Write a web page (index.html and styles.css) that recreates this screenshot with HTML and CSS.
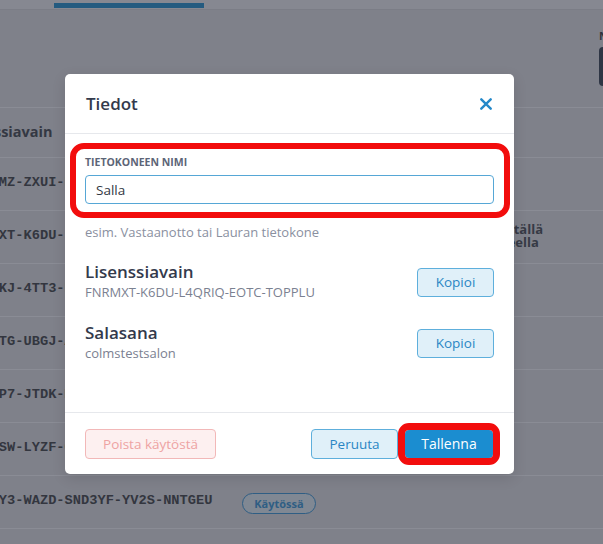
FILE: index.html
```html
<!DOCTYPE html>
<html lang="fi">
<head>
<meta charset="utf-8">
<title>Tiedot</title>
<link rel="stylesheet" href="styles.css">
</head>
<body>
<div class="page">
  <div class="topbar"><div class="tab"></div></div>
  <div class="toolbar">
    <div class="filter">
      <div class="filter-label">Nimi</div>
      <div class="filter-box"></div>
    </div>
  </div>
  <div class="table">
    <div class="thead"><span class="th-key">Lisenssiavain</span></div>
    <div class="row"><span class="key">KQPLMZ-ZXUI-R7TWQE-HNBA-XPLQWE</span><span class="cell"><span class="badge">Käytössä</span></span><span class="cell"></span></div>
    <div class="row"><span class="key">FNRMXT-K6DU-L4QRIQ-EOTC-TOPPLU</span><span class="cell"><span class="badge">Käytössä</span></span><span class="cell name">Käytössä tällä tietokoneella</span></div>
    <div class="row"><span class="key">WVBGKJ-4TT3-HQ2XNE-LMRA-PQZTUV</span><span class="cell"><span class="badge">Käytössä</span></span><span class="cell"></span></div>
    <div class="row"><span class="key">ZPLKTG-UBGJ-AQ4RTE-WNOS-KLPERT</span><span class="cell"><span class="badge">Käytössä</span></span><span class="cell"></span></div>
    <div class="row"><span class="key">HGTRP7-JTDK-MZ3QWE-PLAS-RTYUIO</span><span class="cell"><span class="badge">Käytössä</span></span><span class="cell"></span></div>
    <div class="row"><span class="key">QWMNSW-LYZF-CX8VBN-TREW-ASDFGH</span><span class="cell"><span class="badge">Käytössä</span></span><span class="cell"></span></div>
    <div class="row"><span class="key">KLMNY3-WAZD-SND3YF-YV2S-NNTGEU</span><span class="cell"><span class="badge">Käytössä</span></span><span class="cell"></span></div>
  </div>
</div>

<div class="modal">
  <div class="modal-header">
    <h2 class="modal-title">Tiedot</h2>
    <svg class="close" width="12" height="12" viewBox="0 0 12 12"><path d="M1.3 1.3 L10.7 10.7 M10.7 1.3 L1.3 10.7" stroke="#2388c9" stroke-width="2.4" stroke-linecap="round" fill="none"/></svg>
  </div>
  <div class="modal-body">
    <div class="field-group">
      <div class="field-label">Tietokoneen nimi</div>
      <div class="field-input">Salla</div>
    </div>
    <div class="hint">esim. Vastaanotto tai Lauran tietokone</div>
    <div class="info-row first">
      <div class="info-text">
        <div class="info-title">Lisenssiavain</div>
        <div class="info-value">FNRMXT-K6DU-L4QRIQ-EOTC-TOPPLU</div>
      </div>
      <button class="btn btn-light btn-copy">Kopioi</button>
    </div>
    <div class="info-row">
      <div class="info-text">
        <div class="info-title">Salasana</div>
        <div class="info-value">colmstestsalon</div>
      </div>
      <button class="btn btn-light btn-copy">Kopioi</button>
    </div>
  </div>
  <div class="modal-footer">
    <button class="btn btn-danger">Poista käytöstä</button>
    <div class="footer-right">
      <button class="btn btn-light btn-cancel">Peruuta</button>
      <button class="btn btn-primary">Tallenna</button>
    </div>
  </div>
</div>
</body>
</html>
```
FILE: styles.css
```css
html, body {
  margin: 0;
  padding: 0;
}
body {
  width: 603px;
  height: 544px;
  overflow: hidden;
  background: #7f818a;
  font-family: "Open Sans", "Noto Sans", Arial, sans-serif;
  position: relative;
}
.page {
  width: 603px;
}
.topbar {
  height: 9px;
  background: #868891;
  border-bottom: 1px solid #7b7d86;
  padding-left: 54px;
  display: flex;
  align-items: flex-end;
}
.tab {
  width: 150px;
  height: 5px;
  background: #245b80;
  margin-bottom: 1px;
}
.toolbar {
  height: 97px;
  display: flex;
  justify-content: flex-end;
}
.filter {
  width: 64px;
  margin-right: -60px;
  padding-top: 20px;
}
.filter-label {
  font-size: 11px;
  line-height: 12px;
  font-weight: 700;
  color: #30343e;
  margin-bottom: 5px;
}
.filter-box {
  height: 39px;
  background: #2e3544;
  border-radius: 4px;
}
.table {
  margin-left: -34px;
}
.thead {
  box-sizing: border-box;
  height: 51px;
  border-top: 1px solid #8a8c95;
  border-bottom: 1px solid #8a8c95;
  display: flex;
  align-items: center;
}
.th-key {
  font-size: 14.5px;
  font-weight: 700;
  color: #343843;
  margin-left: -10px;
  margin-top: -3px;
}
.row {
  box-sizing: border-box;
  height: 53px;
  border-bottom: 1px solid #8a8c95;
  display: grid;
  grid-template-columns: 276px 210px 1fr;
  align-items: center;
}
.key {
  font-family: "Liberation Mono", "Courier New", monospace;
  font-weight: 700;
  font-size: 13.7px;
  color: #33363f;
  white-space: nowrap;
  margin-top: -3px;
}
.badge {
  display: inline-flex;
  align-items: center;
  justify-content: center;
  box-sizing: border-box;
  width: 74px;
  height: 21px;
  border: 1.5px solid #2f5e84;
  border-radius: 11px;
  font-size: 11px;
  font-weight: 700;
  color: #2f5e84;
  background: #808893;
}
.name {
  width: 100px;
  font-size: 13px;
  line-height: 13px;
  font-weight: 700;
  color: #363a45;
  margin-top: -3px;
}

/* Modal */
.modal {
  position: absolute;
  left: 65px;
  top: 74px;
  width: 449px;
  height: 400px;
  background: #ffffff;
  border-radius: 5px;
  display: flex;
  flex-direction: column;
  box-shadow: 0 4px 14px rgba(0, 0, 0, 0.12);
}
.modal-header {
  box-sizing: border-box;
  height: 60px;
  border-bottom: 1px solid #e6e8ec;
  display: flex;
  align-items: center;
  justify-content: space-between;
  padding: 0 22px 0 21px;
}
.modal-title {
  margin: 0;
  font-size: 17px;
  font-weight: 600;
  color: #333a4c;
}
.close {
  display: block;
}
.modal-body {
  padding: 9px 20px 0 20px;
}
.field-group {
  border: 6px solid #f20d0d;
  border-radius: 14px;
  padding: 7px 10px 8px 9px;
  margin: 0 -16px 0 -15px;
}
.field-label {
  font-size: 10.5px;
  line-height: 13px;
  font-weight: 700;
  text-transform: uppercase;
  color: #5d6577;
  margin-bottom: 6px;
}
.field-input {
  box-sizing: border-box;
  height: 29px;
  border: 1px solid #56a7d6;
  border-radius: 4px;
  padding: 0 10px;
  display: flex;
  align-items: center;
  font-size: 13.5px;
  color: #333843;
}
.hint {
  margin-top: 5px;
  font-size: 13px;
  line-height: 18px;
  color: #8a909f;
}
.info-row {
  display: flex;
  align-items: center;
  justify-content: space-between;
  margin-top: 20px;
}
.info-title {
  font-size: 17px;
  line-height: 22px;
  font-weight: 600;
  color: #333a4c;
}
.info-value {
  font-size: 13px;
  line-height: 19px;
  color: #7b8191;
}
.btn {
  box-sizing: border-box;
  height: 30px;
  border-radius: 4px;
  font-family: inherit;
  font-size: 13.5px;
  padding: 0;
  cursor: pointer;
}
.btn-light {
  background: #e0f0f9;
  border: 1px solid #5eafdc;
  color: #2a86c4;
}
.btn-copy {
  width: 77px;
  height: 29px;
  margin-top: 1px;
}
.modal-footer {
  margin-top: auto;
  box-sizing: border-box;
  height: 62px;
  border-top: 1px solid #e6e8ec;
  padding: 0 21px 0 20px;
  display: flex;
  align-items: center;
  justify-content: space-between;
}
.btn-danger {
  width: 131px;
  background: #fdf0f0;
  border: 1px solid #f2b8b8;
  color: #eea3a3;
}
.footer-right {
  display: flex;
  align-items: center;
  gap: 7px;
}
.btn-cancel {
  width: 87px;
}
.btn-primary {
  width: 88px;
  height: 28px;
  background: #1b8dd0;
  border: none;
  color: #ffffff;
  font-size: 14px;
  outline: 7px solid #f20d0d;
  outline-offset: 0;
}
```
